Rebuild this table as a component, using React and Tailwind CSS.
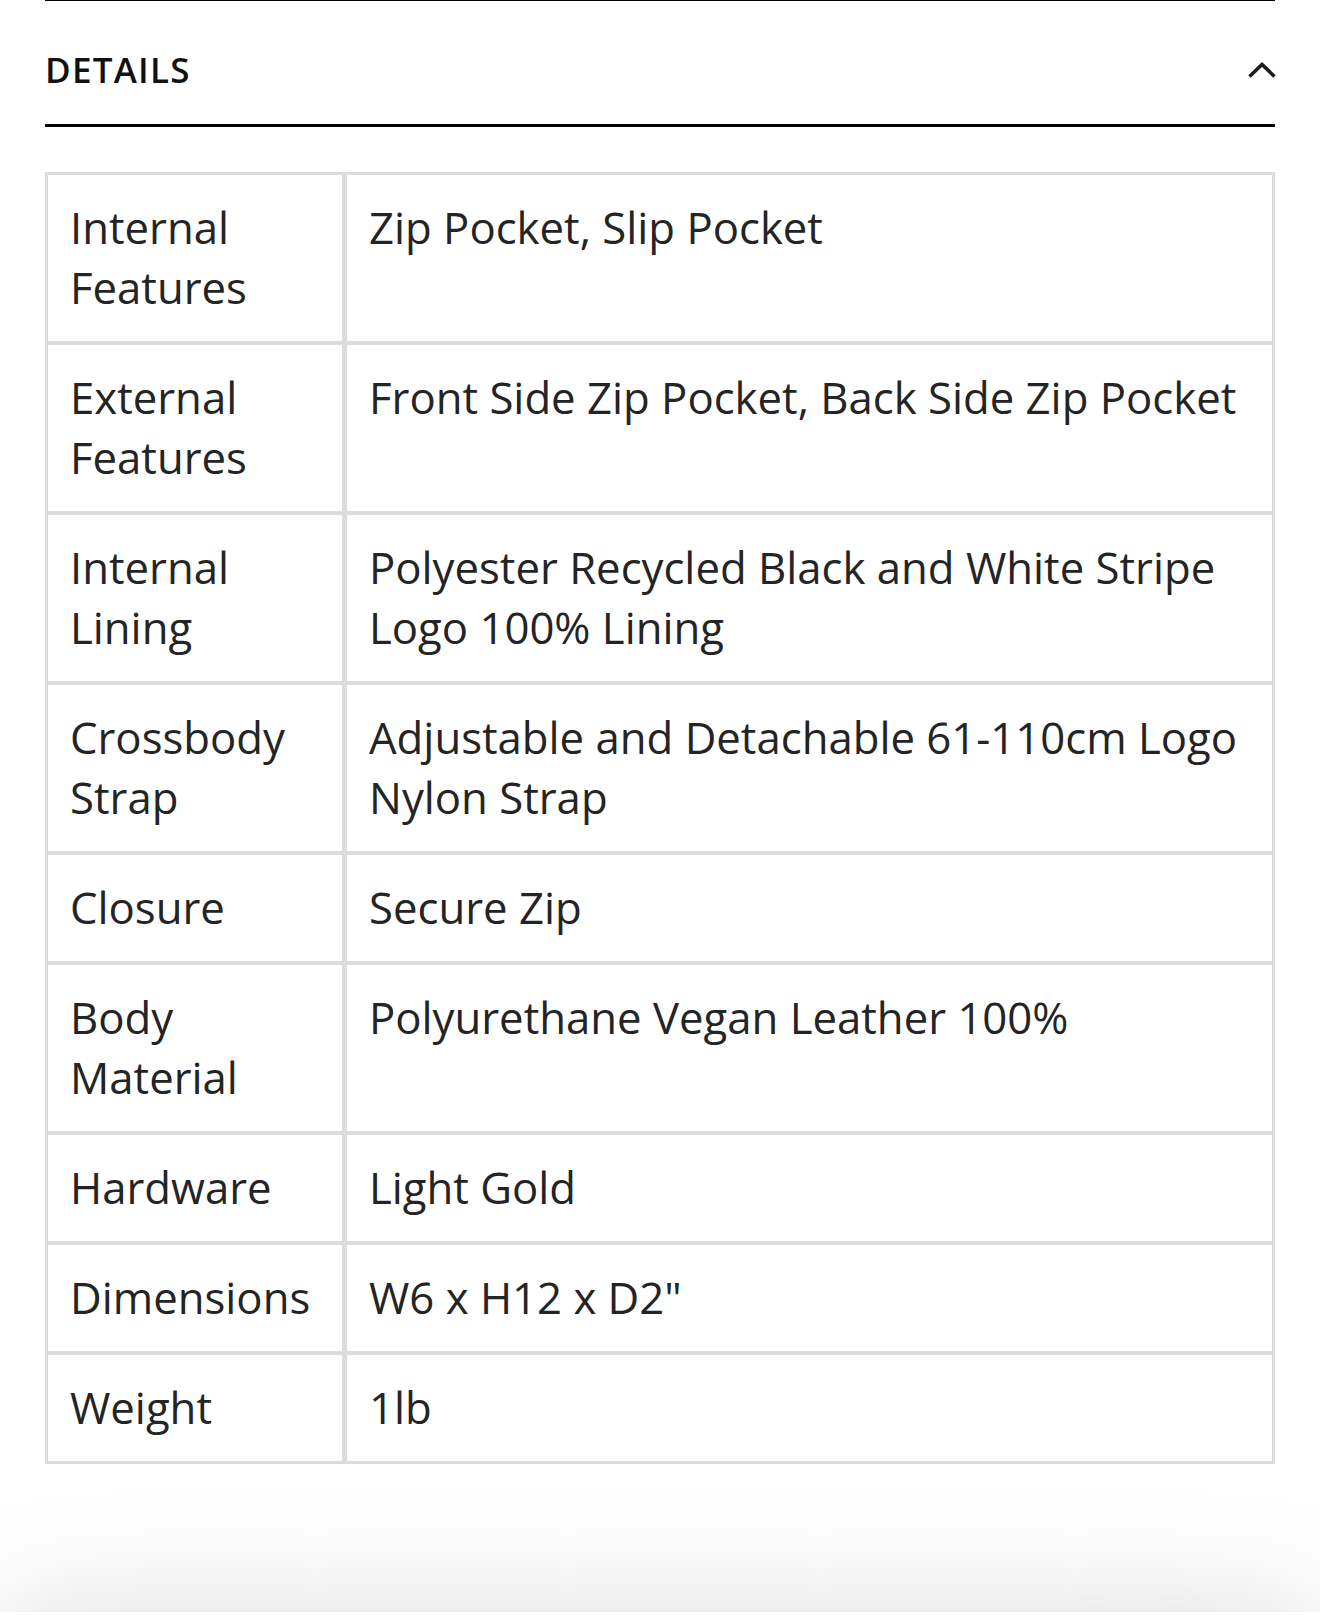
import { useState } from 'react'

const details = [
  { label: 'Internal Features', value: 'Zip Pocket, Slip Pocket' },
  { label: 'External Features', value: 'Front Side Zip Pocket, Back Side Zip Pocket' },
  { label: 'Internal Lining', value: 'Polyester Recycled Black and White Stripe Logo 100% Lining' },
  { label: 'Crossbody Strap', value: 'Adjustable and Detachable 61-110cm Logo Nylon Strap' },
  { label: 'Closure', value: 'Secure Zip' },
  { label: 'Body Material', value: 'Polyurethane Vegan Leather 100%' },
  { label: 'Hardware', value: 'Light Gold' },
  { label: 'Dimensions', value: 'W6 x H12 x D2"' },
  { label: 'Weight', value: '1lb' },
]

function ChevronUp() {
  return (
    <svg width="28" height="17" viewBox="0 0 28 17" fill="none" aria-hidden="true">
      <polyline points="1.5,14.5 14,2.5 26.5,14.5" stroke="#1c1c1c" strokeWidth="3.6" strokeLinejoin="miter" />
    </svg>
  )
}

export default function App() {
  const [isOpen, setIsOpen] = useState(true)

  return (
    <div className="min-h-[1615px] bg-white px-[45px] font-['Open_Sans','Liberation_Sans',sans-serif] text-[#242424]">
      <section className="border-t border-black">
        <button
          type="button"
          onClick={() => setIsOpen(!isOpen)}
          className="flex w-full items-center justify-between border-b-[3px] border-black pt-[45px] pb-[30px] text-left"
        >
          <span className="text-[35px] leading-[48px] font-semibold tracking-[0.035em] text-[#111]">DETAILS</span>
          <span className={isOpen ? 'mr-[-1px]' : 'mr-[-1px] rotate-180'}>
            <ChevronUp />
          </span>
        </button>

        {isOpen && (
          <div className="mt-[45px] grid grid-cols-[294px_1fr] gap-x-[5px] gap-y-[4px] border-[3px] border-[#dcdcdc] bg-[#dcdcdc]">
            {details.map((row) => (
              <div className="contents" key={row.label}>
                <div className="bg-white px-[22px] pt-[22px] pb-[24px] text-[43.7px] leading-[60px]">{row.label}</div>
                <div className="bg-white px-[22px] pt-[22px] pb-[24px] text-[43.7px] leading-[60px]">{row.value}</div>
              </div>
            ))}
          </div>
        )}
      </section>

      {/* bottom sheet peeking in from below the viewport */}
      <div className="fixed inset-x-0 top-[1612px] h-[200px] bg-white shadow-[0_0_130px_rgba(0,0,0,0.14)]" />
    </div>
  )
}
